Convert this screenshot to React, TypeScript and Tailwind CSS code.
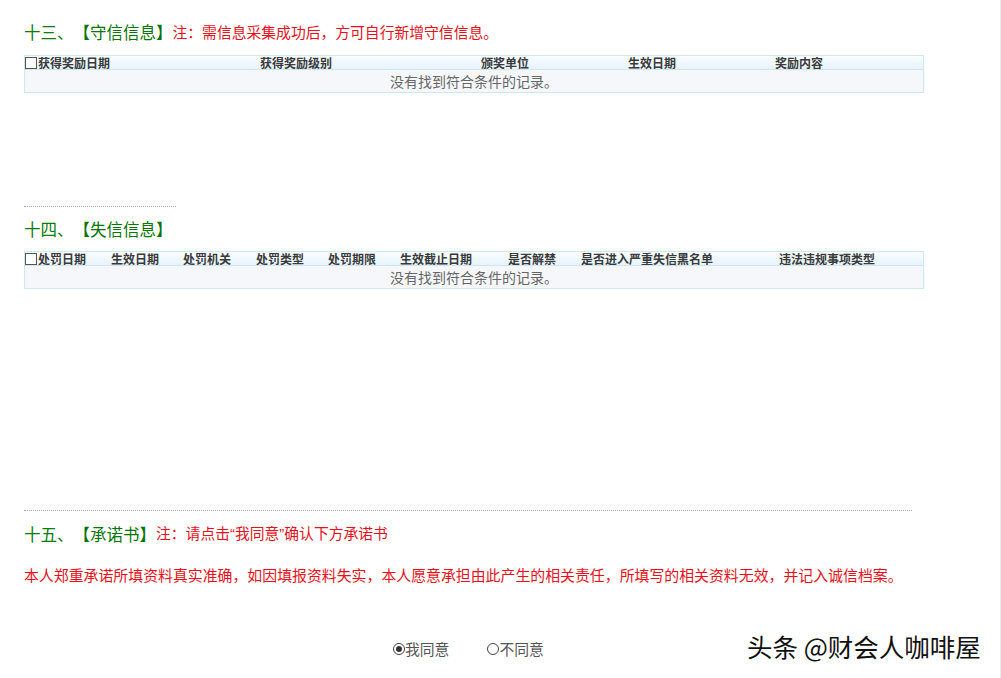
const font = { fontFamily: '"Noto Sans CJK SC", "Noto Sans", sans-serif' };
const narrow = { fontFamily: '"Liberation Sans", sans-serif' };

type Col = { label: string; w: string };

const rewardCols: Col[] = [
  { label: '获得奖励日期', w: 'w-[222px]' },
  { label: '获得奖励级别', w: 'w-[221px]' },
  { label: '颁奖单位', w: 'w-[147px]' },
  { label: '生效日期', w: 'w-[147px]' },
  { label: '奖励内容', w: 'w-[149px]' },
];

const punishCols: Col[] = [
  { label: '处罚日期', w: 'w-[73px]' },
  { label: '生效日期', w: 'w-[72px]' },
  { label: '处罚机关', w: 'w-[73px]' },
  { label: '处罚类型', w: 'w-[72px]' },
  { label: '处罚期限', w: 'w-[72px]' },
  { label: '生效截止日期', w: 'w-[108px]' },
  { label: '是否解禁', w: 'w-[73px]' },
  { label: '是否进入严重失信黑名单', w: 'w-[198px]' },
  { label: '违法违规事项类型', w: 'w-[145px]' },
];

function Heading({ no, title, note }: { no: string; title: string; note?: React.ReactNode }) {
  return (
    <div className="flex h-[24px] items-center whitespace-nowrap">
      <span className="text-[16.5px] text-[#0a7d0a]">{no}、</span>
      <span className="text-[16.5px] text-[#067506]">【{title}】</span>
      {note && <span className="text-[14.8px] text-[#e8101a]">{note}</span>}
    </div>
  );
}

function EmptyTable({ cols }: { cols: Col[] }) {
  return (
    <div className="w-[900px] border border-[#cfe6f3]">
      <div className="flex h-[14px] items-center border-b border-[#cfe6f3] bg-gradient-to-b from-[#fbfdff] to-[#e6f3fb] text-[12px] font-bold leading-none text-[#3a3a3a]">
        <span className="mr-[1px] h-[12px] w-[12px] shrink-0 border border-[#555] bg-white" />
        {cols.map((c) => (
          <div key={c.label} className={`${c.w} shrink-0 whitespace-nowrap`}>
            {c.label}
          </div>
        ))}
      </div>
      <div className="flex h-[22px] items-center justify-center bg-[#f5f7fa] text-[14px] text-[#666]">
        没有找到符合条件的记录。
      </div>
    </div>
  );
}

export default function App() {
  return (
    <div className="relative min-h-[678px] w-full border-r border-[#ececec] bg-white" style={font}>
      <div className="px-[24px] pt-[20px]">
        <Heading no="十三" title="守信信息" note="注：需信息采集成功后，方可自行新增守信信息。" />
        <div className="mt-[11px]">
          <EmptyTable cols={rewardCols} />
        </div>

        <div className="mt-[113px] w-[152px] border-t border-dotted border-[#aaa]" />
        <div className="mt-[10px]">
          <Heading no="十四" title="失信信息" />
        </div>
        <div className="mt-[10px]">
          <EmptyTable cols={punishCols} />
        </div>

        <div className="mt-[221px] w-[888px] border-t border-dotted border-[#aaa]" />
        <div className="mt-[11px]">
          <Heading
            no="十五"
            title="承诺书"
            note={
              <>
                注：请点击<span style={narrow}>“</span>我同意<span style={narrow}>”</span>确认下方承诺书
              </>
            }
          />
        </div>
        <p className="mt-[17px] h-[24px] whitespace-nowrap text-[14.9px] leading-[24px] text-[#e8101a]">
          本人郑重承诺所填资料真实准确，如因填报资料失实，本人愿意承担由此产生的相关责任，所填写的相关资料无效，并记入诚信档案。
        </p>

        <div className="mt-[50px] flex h-[24px] items-center pl-[369px] text-[14.8px] text-[#555]">
          <label className="flex items-center">
            <span className="flex h-[12px] w-[12px] items-center justify-center rounded-full border border-[#444]">
              <span className="h-[6px] w-[6px] rounded-full bg-[#333]" />
            </span>
            我同意
          </label>
          <label className="ml-[38px] flex items-center">
            <span className="h-[12px] w-[12px] rounded-full border border-[#444]" />
            不同意
          </label>
        </div>
      </div>

      <div
        className="absolute left-[747px] top-[629px] whitespace-nowrap text-[25.5px] leading-[34px] text-[#111]"
        style={{ textShadow: '1px 1px 0 #fff, -1px -1px 0 #fff' }}
      >
        头条 @财会人咖啡屋
      </div>
    </div>
  );
}
